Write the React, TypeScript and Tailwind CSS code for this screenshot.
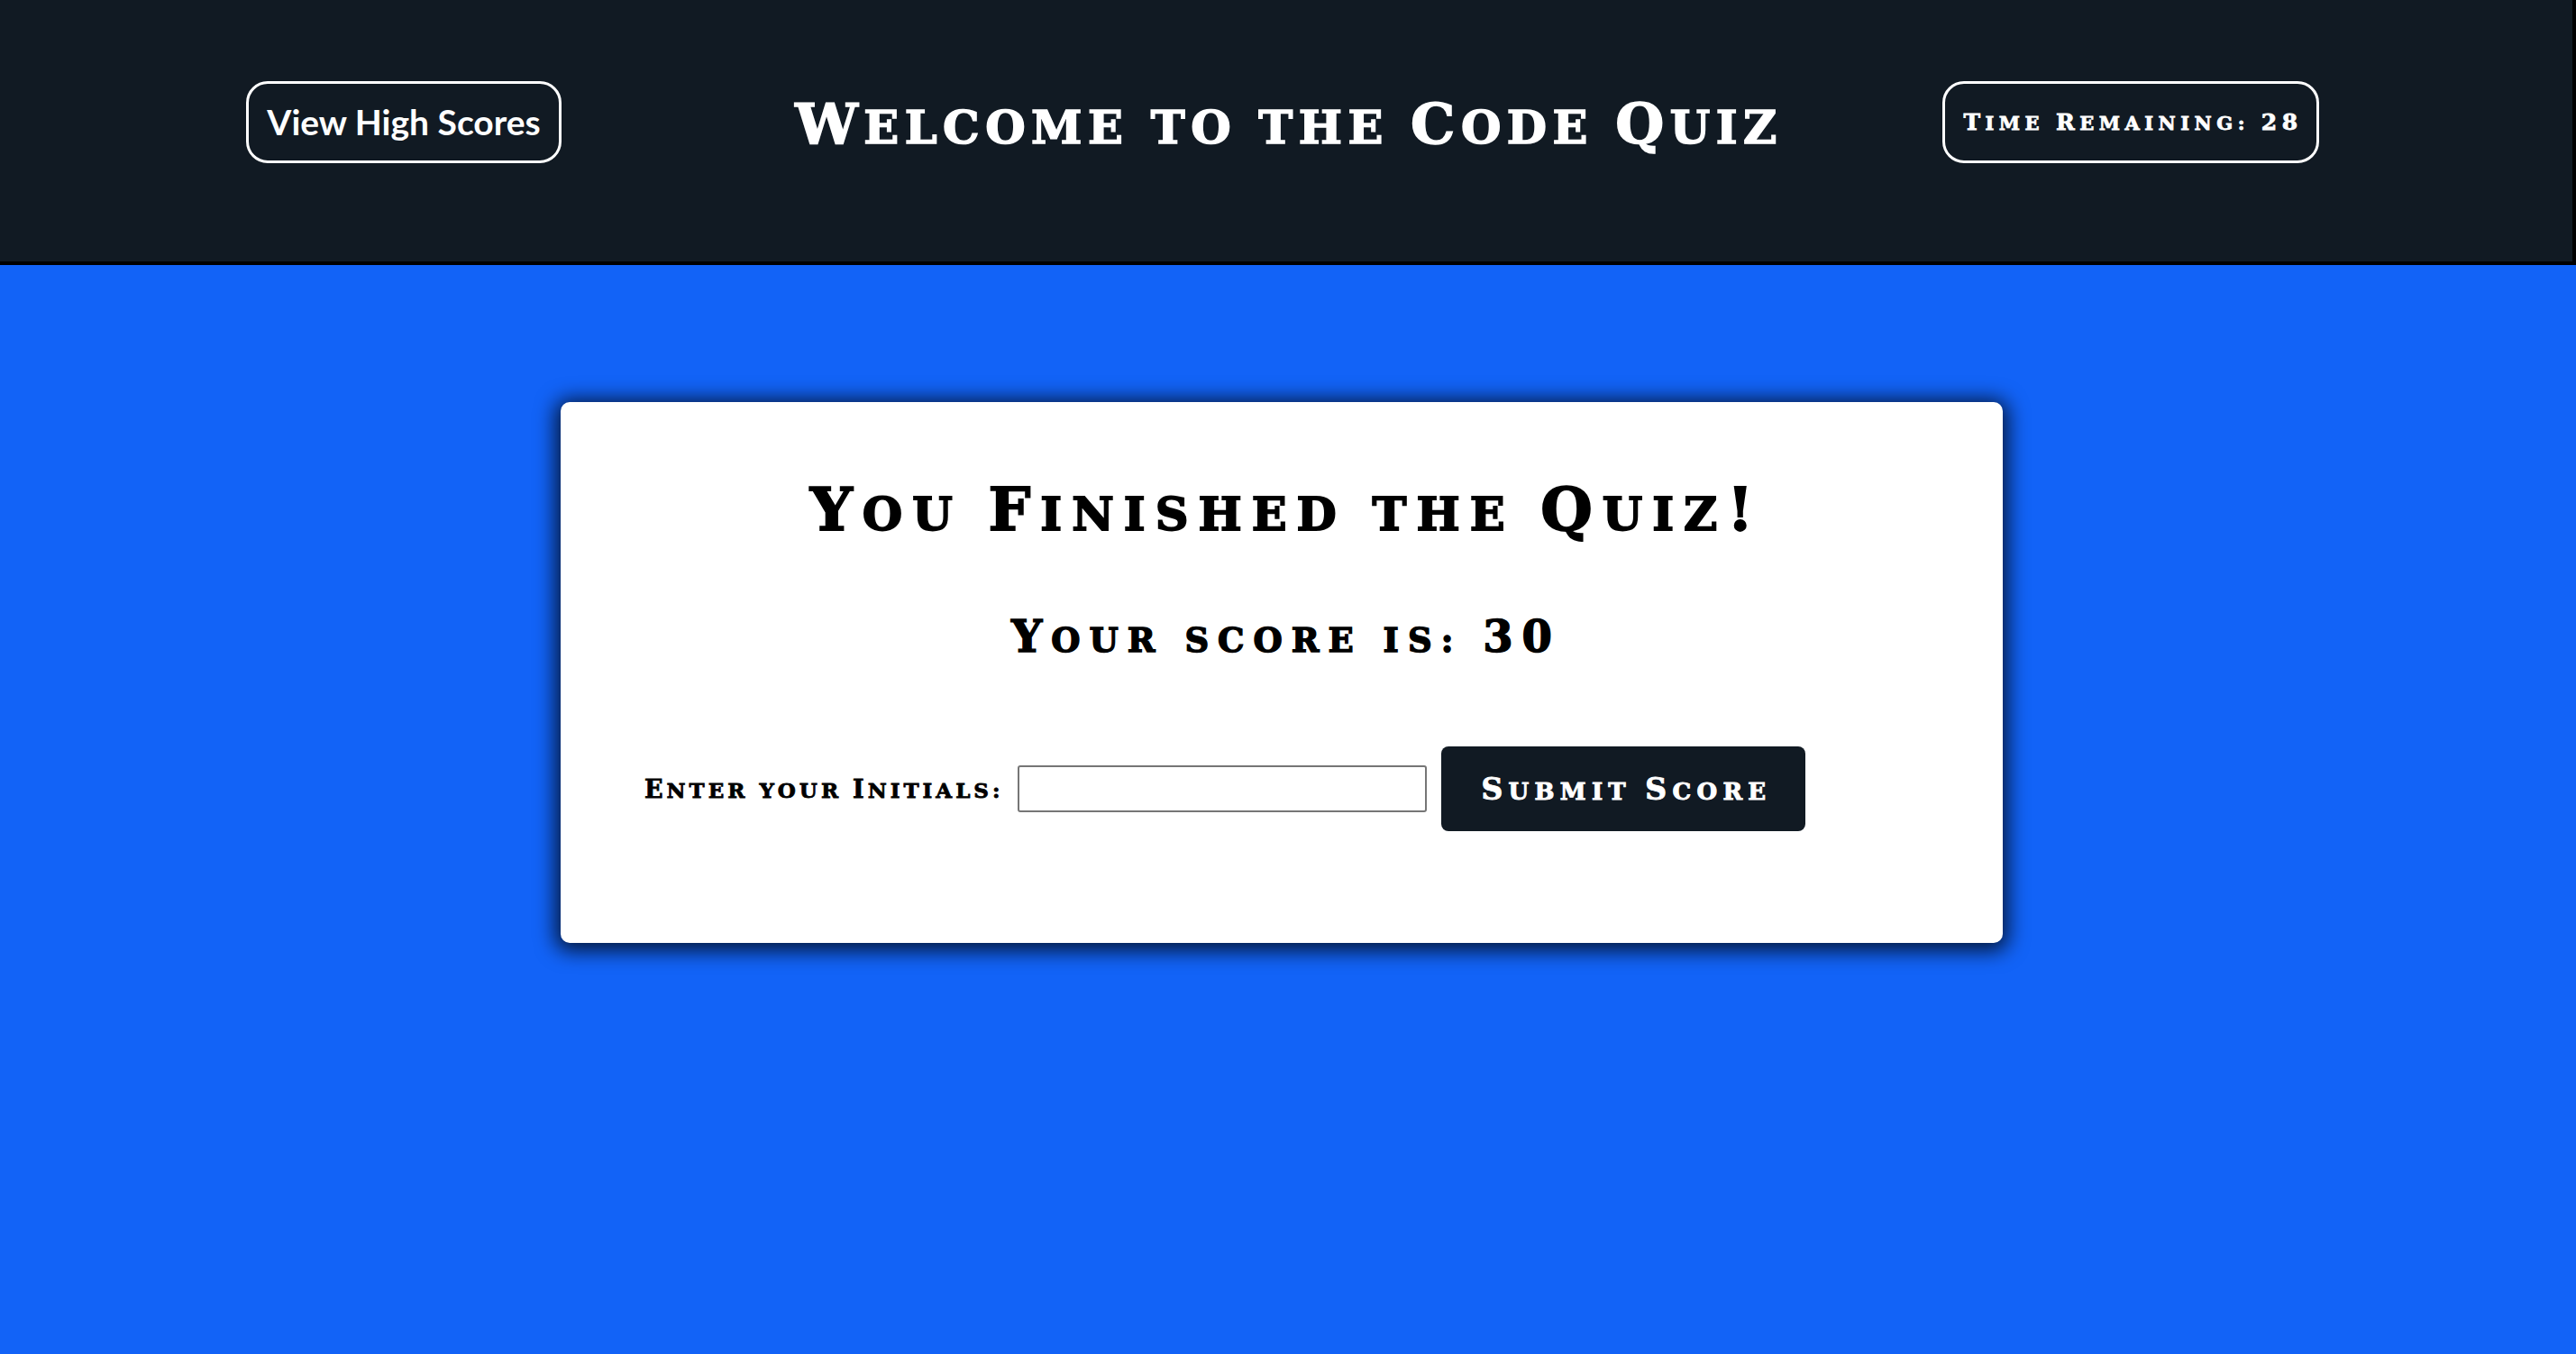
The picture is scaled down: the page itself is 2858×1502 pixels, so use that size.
import React from "react";

function SC({ text, big, small }: { text: string; big: string; small: string }) {
  const runs: { isBig: boolean; s: string }[] = [];
  for (const ch of text) {
    const isBig = /[A-Z0-9!]/.test(ch);
    const last = runs[runs.length - 1];
    if (last && last.isBig === isBig) last.s += ch;
    else runs.push({ isBig, s: ch });
  }
  return (
    <>
      {runs.map((r, i) => (
        <span key={i} className={r.isBig ? big : small + " uppercase"}>
          {r.s}
        </span>
      ))}
    </>
  );
}

export default function App() {
  const serif = { fontFamily: '"DejaVu Serif", "Liberation Serif", serif' };
  return (
    <div className="min-h-screen bg-[#1263f7]">
      <header className="grid h-[294px] grid-cols-[1fr_auto_1fr] items-start border-b-4 border-r-4 border-black bg-[#111a23] pt-[90px]">
        <div className="flex justify-start pl-[273px]">
          <button
            className="flex h-[91px] w-[350px] items-center justify-center rounded-[24px] border-[3px] border-white text-[39px] font-bold text-white"
            style={{ fontFamily: 'Lato, "Open Sans", sans-serif' }}
          >
            View High Scores
          </button>
        </div>
        <h1
          className="mt-[17px] pl-[6px] leading-none font-bold tracking-[6.5px] text-white [-webkit-text-stroke:1.6px_white]"
          style={serif}
        >
          <SC text="Welcome to the Code Quiz" big="text-[62px]" small="text-[51px]" />
        </h1>
        <div className="flex justify-end pr-[281px]">
          <div
            className="flex h-[91px] w-[418px] items-center justify-center rounded-[24px] border-[3px] border-white font-bold text-white"
            style={serif}
          >
            <span className="pl-[5px] leading-none tracking-[5.5px] [-webkit-text-stroke:0.8px_white]">
              <SC text="Time Remaining: 28" big="text-[25px]" small="text-[21px]" />
            </span>
          </div>
        </div>
      </header>

      <main className="flex justify-center pr-[14px] pt-[152px]">
        <section className="h-[600px] w-[1600px] rounded-[10px] bg-white pt-[86px] shadow-[0_3px_22px_6px_rgba(0,0,0,0.75)]">
          <h2
            className="pl-[11px] text-center leading-none font-bold tracking-[11px] text-black [-webkit-text-stroke:1.8px_black]"
            style={serif}
          >
            <SC text="You Finished the Quiz!" big="text-[66px]" small="text-[51px]" />
          </h2>
          <p
            className="mt-[84px] pl-[10px] text-center leading-none font-bold tracking-[10px] text-black [-webkit-text-stroke:1.4px_black]"
            style={serif}
          >
            <SC text="Your score is: 30" big="text-[48px]" small="text-[37px]" />
          </p>
          <div className="mt-[98px] flex items-center pl-[93px]">
            <label
              className="leading-none font-bold tracking-[4px] text-black [-webkit-text-stroke:0.8px_black]"
              style={serif}
            >
              <SC text="Enter your Initials:" big="text-[27px]" small="text-[23px]" />
            </label>
            <input
              type="text"
              className="ml-[16px] h-[52px] w-[454px] rounded-[3px] border-2 border-[#767676] bg-white"
            />
            <button
              className="ml-[16px] flex h-[94px] w-[404px] items-center justify-center rounded-[8px] bg-[#111a23] font-bold text-white"
              style={serif}
            >
              <span className="pl-[6px] leading-none tracking-[6.3px] [-webkit-text-stroke:1px_white]">
                <SC text="Submit Score" big="text-[33px]" small="text-[26px]" />
              </span>
            </button>
          </div>
        </section>
      </main>
    </div>
  );
}
